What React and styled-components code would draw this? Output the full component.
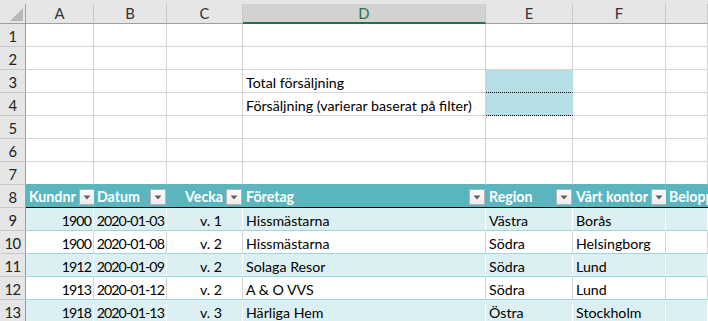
import React from "react";
import styled, { createGlobalStyle, css } from "styled-components";

const GlobalStyle = createGlobalStyle`
  html, body { margin: 0; padding: 0; background: #fff; overflow: hidden; }
  body { font-family: Lato, "Noto Sans", sans-serif; }
`;

const COLS = "26px 68px 73px 76px 243px 87px 93px 1fr";

const Sheet = styled.div`
  display: grid;
  grid-template-columns: ${COLS};
  grid-template-rows: 20px repeat(13, 23px);
  border-top: 4px solid #e6e6e6;
  width: 708px;
  font-size: 14.2px;
  color: #000;
`;

const Corner = styled.div`
  box-sizing: border-box;
  background: #e6e6e6;
  border-right: 1px solid #9e9e9e;
  border-bottom: 1px solid #9e9e9e;
  display: flex;
  align-items: flex-end;
  justify-content: flex-end;
  padding: 0 2px 2px 0;
`;

const ColHead = styled.div`
  box-sizing: border-box;
  background: ${(p) => (p.$selected ? "#d2d2d2" : "#e6e6e6")};
  border-right: 1px solid #c8c8c8;
  border-bottom: ${(p) => (p.$selected ? "2px solid #217346" : "1px solid #9e9e9e")};
  color: ${(p) => (p.$selected ? "#217346" : "#333")};
  display: flex;
  align-items: center;
  justify-content: center;
  padding-bottom: ${(p) => (p.$selected ? "0" : "1px")};
  font-size: 14.8px;
  line-height: 1;
`;

const RowHead = styled.div`
  box-sizing: border-box;
  background: #e6e6e6;
  border-right: 1px solid #9e9e9e;
  border-bottom: 1px solid #c8c8c8;
  color: #222;
  display: flex;
  align-items: flex-end;
  justify-content: center;
  padding-bottom: 2px;
  font-size: 14.8px;
  letter-spacing: -0.6px;
  line-height: 1;
`;

const Cell = styled.div`
  box-sizing: border-box;
  border-right: 1px solid #d4d4d4;
  border-bottom: 1px solid #d4d4d4;
  display: flex;
  align-items: flex-end;
  justify-content: ${(p) => (p.$align === "right" ? "flex-end" : "flex-start")};
  padding: 0 ${(p) => p.$padRight ?? 3}px 2px 3px;
  white-space: nowrap;
  overflow: hidden;
  line-height: 1;
  letter-spacing: ${(p) => (p.$tight ? "-0.9px" : "normal")};
  ${(p) =>
    p.$input &&
    css`
      background: #b7dfe6;
      border-bottom: 1px dotted #000;
      border-right-color: #b7dfe6;
    `}
  ${(p) =>
    p.$above &&
    css`
      border-bottom-color: #5ab5bf;
    `}
`;

const BodyCell = styled(Cell)`
  background: ${(p) => (p.$band ? "#dcf0f3" : "#fff")};
  border-right-color: ${(p) => (p.$band ? "#fff" : "#d4d4d4")};
  border-bottom-color: #9fd5de;
`;

const TableHead = styled.div`
  box-sizing: border-box;
  background: #5ab5bf;
  border-bottom: 1px solid #000;
  display: flex;
  align-items: flex-end;
  gap: 3px;
  padding: 0 1px 2px 3px;
  color: #fff;
  font-weight: 700;
  white-space: nowrap;
  overflow: hidden;
  line-height: 1;
`;

const HeadLabel = styled.span`
  flex: 1;
  text-align: ${(p) => (p.$align === "right" ? "right" : "left")};
  padding-bottom: 1px;
`;

const FilterButton = styled.span`
  box-sizing: border-box;
  flex: none;
  width: 16px;
  height: 16px;
  background: linear-gradient(#fbfbfb, #ececec);
  border: 1px solid #b4b4b4;
  display: flex;
  align-items: center;
  justify-content: center;
`;

const Arrow = () => (
  <svg width="8" height="5" viewBox="0 0 8 5">
    <path d="M0.5 0.5 H7.5 L4 4.5 Z" fill="#606060" />
  </svg>
);

const CornerTriangle = () => (
  <svg width="13" height="13" viewBox="0 0 13 13">
    <path d="M13 0 V13 H0 Z" fill="#b9b9b9" />
  </svg>
);

const letters = ["A", "B", "C", "D", "E", "F", ""];

const headers = [
  { t: "Kundnr" },
  { t: "Datum" },
  { t: "Vecka", align: "right" },
  { t: "Företag" },
  { t: "Region" },
  { t: "Vårt kontor" },
  { t: "Belopp", noBtn: true },
];

const data = [
  ["1900", "2020-01-03", "v. 1", "Hissmästarna", "Västra", "Borås"],
  ["1900", "2020-01-08", "v. 2", "Hissmästarna", "Södra", "Helsingborg"],
  ["1912", "2020-01-09", "v. 2", "Solaga Resor", "Södra", "Lund"],
  ["1913", "2020-01-12", "v. 2", "A & O VVS", "Södra", "Lund"],
  ["1918", "2020-01-13", "v. 3", "Härliga Hem", "Östra", "Stockholm"],
];

const colAlign = ["right", "right", "right", "left", "left", "left", "left"];
const colPad = [2, 2, 20, 3, 3, 3, 3];
const colTight = [true, true, false, false, false, false, false];

export default function App() {
  const blankRows = [1, 2, 3, 4, 5, 6, 7];
  return (
    <>
      <GlobalStyle />
      <Sheet>
        <Corner>
          <CornerTriangle />
        </Corner>
        {letters.map((l, i) => (
          <ColHead key={i} $selected={l === "D"}>
            {l}
          </ColHead>
        ))}

        {blankRows.map((r) => (
          <React.Fragment key={r}>
            <RowHead>{r}</RowHead>
            {letters.map((_, c) => {
              let content = null;
              if (c === 3 && r === 3) content = "Total försäljning";
              if (c === 3 && r === 4) content = "Försäljning (varierar baserat på filter)";
              const input = c === 4 && (r === 3 || r === 4);
              return (
                <Cell key={c} $input={input} $above={r === 7}>
                  {content}
                </Cell>
              );
            })}
          </React.Fragment>
        ))}

        <RowHead>8</RowHead>
        {headers.map((h, i) => (
          <TableHead key={i}>
            <HeadLabel $align={h.align}>{h.t}</HeadLabel>
            {!h.noBtn && (
              <FilterButton>
                <Arrow />
              </FilterButton>
            )}
          </TableHead>
        ))}

        {data.map((row, ri) => (
          <React.Fragment key={ri}>
            <RowHead>{9 + ri}</RowHead>
            {[...row, ""].map((v, ci) => (
              <BodyCell
                key={ci}
                $band={ri % 2 === 0}
                $align={colAlign[ci]}
                $padRight={colPad[ci]}
                $tight={colTight[ci]}
              >
                {v}
              </BodyCell>
            ))}
          </React.Fragment>
        ))}
      </Sheet>
    </>
  );
}
